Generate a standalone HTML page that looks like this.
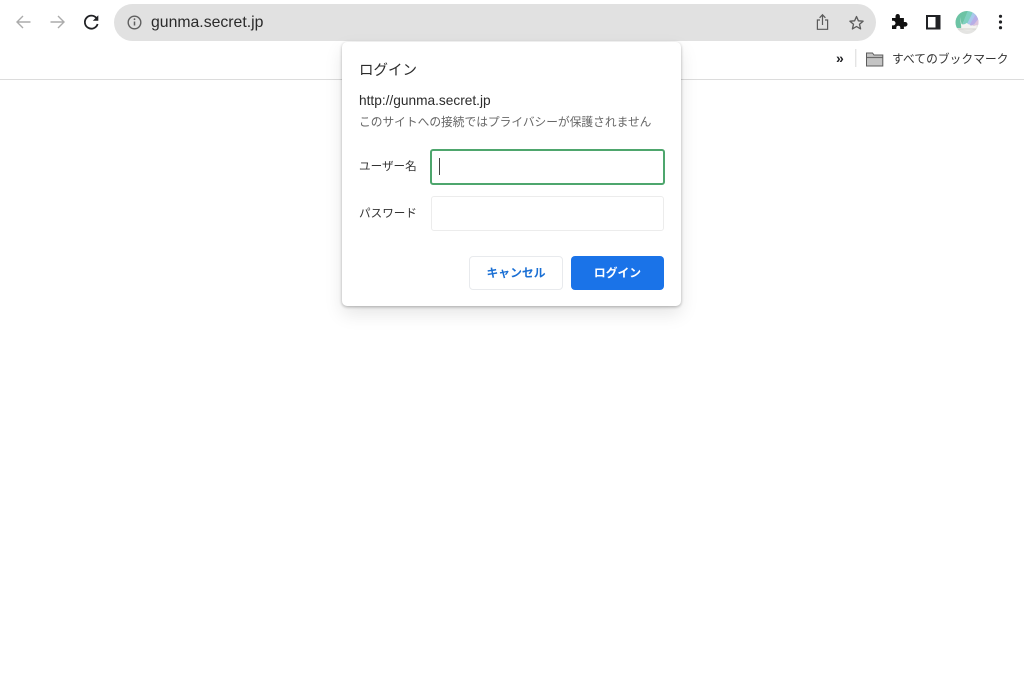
<!DOCTYPE html>
<html lang="ja">
<head>
<meta charset="utf-8">
<style>
html,body{margin:0;padding:0;width:1024px;height:690px;overflow:hidden;background:#fff;}
body{font-family:"Liberation Sans","Noto Sans CJK JP",sans-serif;position:relative;color:#202124;}
#w{position:absolute;left:0;top:0;width:1024px;height:690px;filter:blur(.3px);}
.a{position:absolute;white-space:nowrap;}
svg{position:absolute;overflow:visible;}
</style>
</head>
<body>
<div id="w">
<div class="a" style="left:0;top:79px;width:1024px;height:1px;background:#dcdcdc;"></div>
<div class="a" style="left:114px;top:4px;width:762px;height:37px;border-radius:19px;background:#e1e1e1;"></div>

<svg style="left:0;top:0" width="1024" height="80" viewBox="0 0 1024 80" fill="none">
<defs><clipPath id="av"><circle cx="967" cy="22.500" r="11.500"/></clipPath></defs>
<path d="M30.500 22H17M23 16L17 22l6 6" stroke="#ababab" stroke-width="1.400"/>
<path d="M50.500 22H64M58 16L64 22l-6 6" stroke="#ababab" stroke-width="1.400"/>
<path d="M96.600 18.300A6.500 6.500 0 1 0 97.600 24" stroke="#202124" stroke-width="1.800"/>
<path d="M98.300 15.200V20.700H92.800Z" fill="#202124"/>
<circle cx="134.500" cy="22.500" r="6.300" stroke="#5f5f5f" stroke-width="1.400"/>
<path d="M134.500 21.500v4" stroke="#5f5f5f" stroke-width="1.500"/>
<circle cx="134.500" cy="19.200" r=".9" fill="#5f5f5f"/>
<path d="M822.500 25V15M819.600 17.800l2.900-3 2.900 3M820 20h-2.600v9.300h10.200V20H825" stroke="#5a5a5a" stroke-width="1.200"/>
<path d="M856.500 16.500l1.900 4.300 4.700.4-3.600 3.100 1.100 4.600-4.100-2.400-4.100 2.400 1.100-4.600-3.600-3.100 4.700-.4z" stroke="#5a5a5a" stroke-width="1.300" stroke-linejoin="round"/>
<path d="M892 20h3.500v-1.800a2.200 2.200 0 0 1 4.400 0V20h4v4h1.300a2.300 2.300 0 0 1 0 4.600h-1.300V31h-3.600v-1.200a2 2 0 0 0-4 0V31H892v-3.600h1.200a2.300 2.300 0 0 0 0-4.600H892z" fill="#111" transform="translate(0,-2)"/>
<rect x="927" y="16" width="12.500" height="12.500" stroke="#202124" stroke-width="2"/>
<rect x="935.500" y="16" width="4" height="12.500" fill="#202124"/>
<circle cx="1000.500" cy="16.300" r="1.600" fill="#202124"/>
<circle cx="1000.500" cy="22" r="1.600" fill="#202124"/>
<circle cx="1000.500" cy="27.700" r="1.600" fill="#202124"/>
<g clip-path="url(#av)">
<rect x="955" y="11" width="24" height="24" fill="#e4e4e2"/>
<path d="M955 28L955 11H968L961 28Z" fill="#6cc3a4"/>
<path d="M968 10L979 13V17L962 26Z" fill="#7fd0c0"/>
<path d="M973 12L980 15V19L966 26Z" fill="#a8c8ec"/>
<path d="M976 14L980 18V23L969 26Z" fill="#b8aee6"/>
<path d="M979 18L980 24L972 27Z" fill="#dcc4dc"/>
<path d="M960 17l1.500 7c2 1 4 0 5-1l5 3c2 0 3 0 5-1v3c-5 3-11 3-15 1z" fill="#f3f3f0"/>
<path d="M958 29h18" stroke="#d2d2cc" stroke-width="1"/>
</g>
<path d="M855.800 49v18" stroke="#d8d8d8" stroke-width="1"/>
<path d="M866.500 53h6l1.500 2h8.800v11h-16.300z" fill="#c4c4c4" stroke="#5c5c5c" stroke-width="1"/>
<path d="M867 57.500h15.500" stroke="#6a6a6a" stroke-width="1.200"/>
</svg>

<div class="a" style="left:151px;top:13px;font-size:15.800px;line-height:19px;color:#2a2a2a;">gunma.secret.jp</div>
<div class="a" style="left:836px;top:50px;font-size:14px;line-height:17px;font-weight:bold;color:#202124;">»</div>
<div class="a" style="left:892px;top:52px;font-size:11.700px;line-height:16px;color:#333;letter-spacing:.1px;">すべてのブックマーク</div>

<div class="a" style="left:342px;top:42px;width:339px;height:264px;background:#fff;border-radius:5px;box-shadow:0 1px 3px rgba(0,0,0,.3),0 8px 18px rgba(0,0,0,.1);"></div>
<div class="a" style="left:359px;top:60px;font-size:14.500px;line-height:20px;color:#2b2b2b;padding-top:1px;">ログイン</div>
<div class="a" style="left:359px;top:92px;font-size:13.700px;line-height:17px;color:#2b2b2b;">http://gunma.secret.jp</div>
<div class="a" style="left:359px;top:114px;font-size:11.720px;line-height:17px;color:#666;">このサイトへの接続ではプライバシーが保護されません</div>
<div class="a" style="left:359px;top:158px;font-size:11.600px;line-height:17px;color:#333;">ユーザー名</div>
<div class="a" style="left:430px;top:149px;width:231px;height:32px;border:2px solid #4ea66d;border-radius:3px;background:#fff;"></div>
<div class="a" style="left:439px;top:158px;width:1px;height:17px;background:#444;"></div>
<div class="a" style="left:359px;top:205px;font-size:11.600px;line-height:17px;color:#333;">パスワード</div>
<div class="a" style="left:431px;top:196px;width:231px;height:33px;border:1px solid #ececec;border-radius:3px;background:#fff;"></div>
<div class="a" style="left:469px;top:256px;width:92px;height:32px;border:1px solid #e8eaed;border-radius:4px;background:#fff;text-align:center;font-size:11.800px;line-height:32px;font-weight:bold;color:#1a6fd4;">キャンセル</div>
<div class="a" style="left:571px;top:256px;width:93px;height:34px;border-radius:4px;background:#1a73e8;text-align:center;font-size:11.800px;line-height:34px;font-weight:bold;color:#fff;">ログイン</div>
</div>
</body>
</html>
